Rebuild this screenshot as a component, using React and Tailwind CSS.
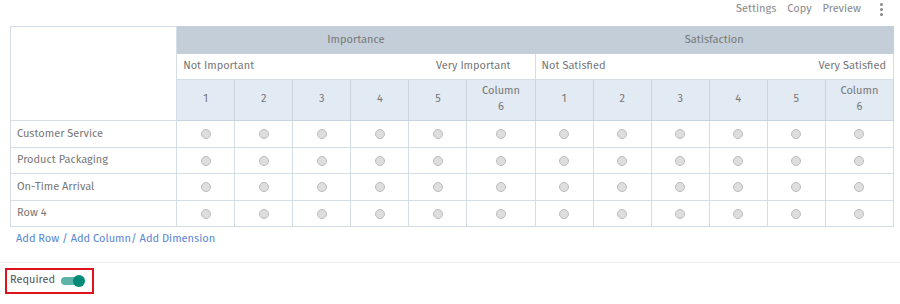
import React from 'react';

const dims = [
  { name: 'Importance', low: 'Not Important', high: 'Very Important', pr: 'pr-[24px]' },
  { name: 'Satisfaction', low: 'Not Satisfied', high: 'Very Satisfied', pr: 'pr-[7px]' },
];
const cols = ['1', '2', '3', '4', '5', 'Column 6'];
const rows = ['Customer Service', 'Product Packaging', 'On-Time Arrival', 'Row 4'];

const Radio = () => (
  <span className="inline-block w-[10px] h-[10px] rounded-full bg-[#dedede] border border-[#bdbdbd] align-middle" />
);

const App = () => {
  return (
    <div className="w-[900px] h-[304px] bg-white text-[#777] font-['Fira_Sans','Lato','Noto_Sans',sans-serif] text-[11px] overflow-hidden">
      {/* Toolbar */}
      <div className="flex items-center justify-end h-[16px] mt-[1px] pr-[17px] gap-[11px] text-[#8a8a8a] text-[11px]">
        <span>Settings</span>
        <span>Copy</span>
        <span>Preview</span>
        <span className="flex flex-col gap-[2px] ml-[8px] items-center">
          <span className="w-[3px] h-[3px] rounded-full bg-[#888]" />
          <span className="w-[3px] h-[3px] rounded-full bg-[#888]" />
          <span className="w-[3px] h-[3px] rounded-full bg-[#888]" />
        </span>
      </div>

      {/* Matrix */}
      <div className="pl-[10px] mt-[9px]">
        <table className="border-collapse table-fixed w-[884px]">
          <colgroup>
            <col className="w-[166px]" />
            {dims.map((d) =>
              cols.map((c, i) => (
                <col key={d.name + c} className={i === 5 ? 'w-[68px]' : 'w-[58px]'} />
              ))
            )}
          </colgroup>
          <thead>
            <tr className="h-[27px]">
              <th rowSpan={3} className="border border-[#d3dde6] bg-white" />
              {dims.map((d) => (
                <th key={d.name} colSpan={6} className="bg-[#c3ced8] border border-[#c3ced8] font-normal text-center">
                  {d.name}
                </th>
              ))}
            </tr>
            <tr className="h-[26px]">
              {dims.map((d) => (
                <th key={d.name} colSpan={6} className={`border border-[#d3dde6] font-normal pl-[6px] ${d.pr}`}>
                  <div className="flex justify-between">
                    <span>{d.low}</span>
                    <span>{d.high}</span>
                  </div>
                </th>
              ))}
            </tr>
            <tr className="h-[41px]">
              {dims.map((d) =>
                cols.map((c) => (
                  <th key={d.name + c} className="bg-[#e2eaf3] border border-[#c8d4df] font-normal text-center leading-[16px] pb-[2px]">
                    {c === 'Column 6' ? (
                      <>
                        Column
                        <br />6
                      </>
                    ) : (
                      c
                    )}
                  </th>
                ))
              )}
            </tr>
          </thead>
          <tbody>
            {rows.map((r) => (
              <tr key={r} className="h-[26.5px]">
                <td className="border border-[#d3dde6] pl-[6px]">{r}</td>
                {dims.map((d) =>
                  cols.map((c) => (
                    <td key={d.name + c} className="border border-[#d3dde6] text-center leading-none">
                      <Radio />
                    </td>
                  ))
                )}
              </tr>
            ))}
          </tbody>
        </table>
        <div className="mt-[4px] pl-[6px] text-[#5a86d4] text-[11px]">
          Add Row / Add Column/ Add Dimension
        </div>
      </div>

      {/* Footer */}
      <div className="mt-[14px] border-t border-[#eeeeee]" />
      <div className="pl-[5px] pt-[5px]">
        <div className="inline-flex items-center w-[89px] h-[26px] border-2 border-[#e0121c] pl-[3px] gap-[6px] text-[#555]">
          <span>Required</span>
          <span className="relative w-[24px] h-[12px] flex items-center">
            <span className="w-[22px] h-[8px] rounded-full bg-[#5eb3a9]" />
            <span className="absolute right-0 w-[12px] h-[12px] rounded-full bg-[#008a78]" />
          </span>
        </div>
      </div>
    </div>
  );
};

export default App;
